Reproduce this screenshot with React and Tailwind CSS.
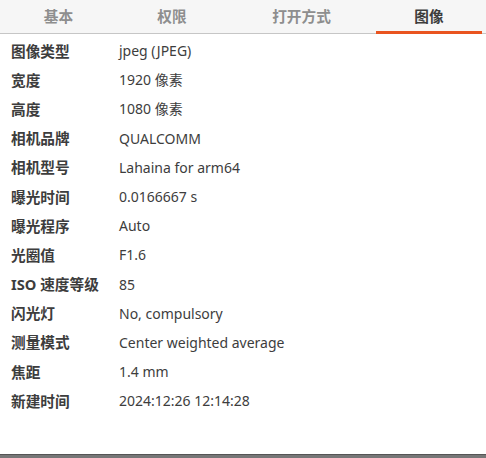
import React from "react";

const rows = [
  ["图像类型", "jpeg (JPEG)"],
  ["宽度", "1920 像素"],
  ["高度", "1080 像素"],
  ["相机品牌", "QUALCOMM"],
  ["相机型号", "Lahaina for arm64"],
  ["曝光时间", "0.0166667 s"],
  ["曝光程序", "Auto"],
  ["光圈值", "F1.6"],
  ["ISO 速度等级", "85"],
  ["闪光灯", "No, compulsory"],
  ["测量模式", "Center weighted average"],
  ["焦距", "1.4 mm"],
  ["新建时间", "2024:12:26 12:14:28"],
];

const tabs = [
  ["基本", "w-[117px]"],
  ["权限", "w-[110px]"],
  ["打开方式", "w-[149px]"],
  ["图像", "w-[106px]"],
];

export default function App() {
  return (
    <div
      className="w-[486px] h-[458px] bg-white flex flex-col overflow-hidden"
      style={{ fontFamily: '"Noto Sans", "Noto Sans CJK SC", sans-serif' }}
    >
      <div className="h-[34px] bg-[#f6f6f6] border-b border-[#c6c6c6] flex shrink-0">
        {tabs.map(([t, w], i) => (
          <div
            key={t}
            className={`${w} relative flex items-center justify-center text-[14.67px] font-bold ${
              i === 3 ? "text-[#3d3d3d]" : "text-[#8e8e8e]"
            }`}
          >
            <span className="-mt-[1px]">{t}</span>
            {i === 3 && (
              <div className="absolute left-0 right-0 bottom-[-1px] h-[3px] bg-[#e95420]" />
            )}
          </div>
        ))}
      </div>
      <div className="flex-1 pt-[2px] text-[#3d3d3d]">
        {rows.map(([k, v]) => (
          <div key={k} className="h-[29.2px] flex items-center">
            <div className="w-[119px] pl-[11px] font-bold text-[14.67px]">{k}</div>
            <div className="text-[14px]">{v}</div>
          </div>
        ))}
      </div>
      <div className="h-[4px] shrink-0 bg-[#777] border-t border-[#555]" />
    </div>
  );
}
